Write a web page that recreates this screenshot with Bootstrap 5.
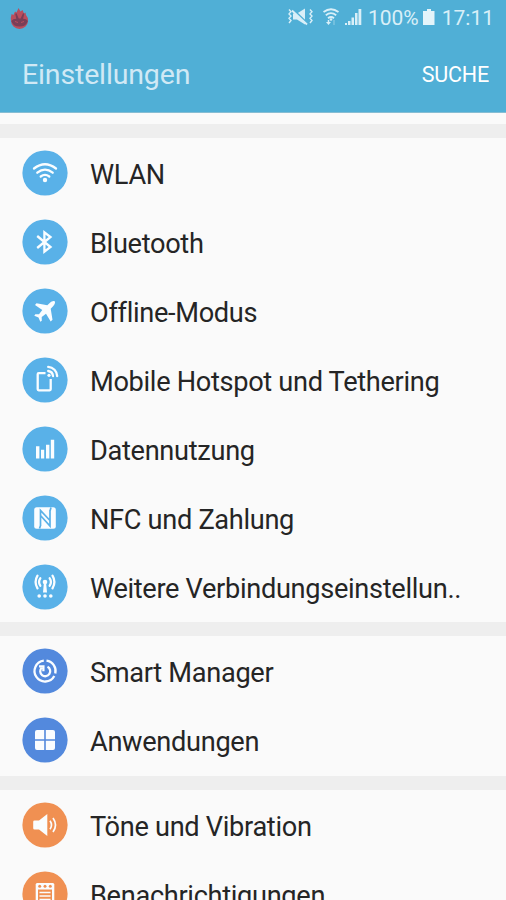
<!DOCTYPE html>
<html lang="de">
<head>
<meta charset="utf-8">
<meta name="viewport" content="width=device-width, initial-scale=1">
<title>Einstellungen</title>
<link href="https://cdn.jsdelivr.net/npm/bootstrap@5.3.0/dist/css/bootstrap.min.css" rel="stylesheet">
<style>
body{font-family:Roboto,sans-serif;background:#fafafa;color:#252525;height:900px}
.top{background:#50afd6;height:113px;border-bottom:1px solid #86bdd3}
.status{height:36px;color:#d9eff8;font-size:21px;line-height:36px;padding-right:12px}
.appbar{height:76px;padding:2px 17px 0 22px}
.title{font-size:28.500px;line-height:74px;color:#d0e9f5;letter-spacing:-.15px}
.search{font-size:21.500px;line-height:74px;color:#fff;letter-spacing:-.2px}
.list{padding-top:11px}
.section{border-top:14px solid #eee;padding-bottom:1px}
.section.blue{padding-bottom:2px}
.item{height:69px;padding-left:22px}
.item svg{width:46px;height:46px;flex:none}
.label{font-size:27.200px;line-height:32px;letter-spacing:-.32px;padding-top:5px;margin-left:22px;white-space:nowrap;color:#252525}
.disc{fill:#59b1e8}.blue .disc{fill:#5389dd}.orange .disc{fill:#f09052}
.ln{fill:none;stroke:#fafdff;stroke-width:2.300}
.ln.thin{stroke-width:1.700}
.fl{fill:#fafdff}
</style>
<script src="https://cdn.jsdelivr.net/npm/bootstrap@5.3.0/dist/js/bootstrap.bundle.min.js"></script>
</head>
<body class="overflow-hidden">
<header class="top">
  <div class="status d-flex align-items-center">
    <svg class="ms-2" width="24" height="24" viewBox="8 6 24 24"><path d="M11.500 14l2 1 1.500-3.500 1.500 1L18.500 8l2 3.500 2-1.500 1.500 3.500 1.500-1 .5 2.500q2.500 3 2 5.500a8.500 8.500 0 0 1-17 0q-.5-3 .5-6z" fill="#b94e5e"/><path d="M11.300 21q1.700-2.200 5-2.200l-1.100-5 1.300-.5 2.200 5.300h2l2.300-5.300 1.300.5-1.200 5q3.300 0 4.800 2.200-1.500 5.500-8.300 5.500t-8.300-5.500z" fill="#7a3e57"/><path d="M15 21.500l3 1M24 21.500l-3 1" stroke="#b94e5e"/></svg>
    <div class="ms-auto d-flex align-items-center">
      <svg width="27" height="20" viewBox="287 8 27 20"><path d="M293 13.500h4l8-5v16l-8-5h-4z" fill="#d9eff8"/><path d="M289 9.500l2 2.200-2 2.200 2 2.200-2 2.200 2 2.200-2 2.500M310 9.500l2 2.200-2 2.200 2 2.200-2 2.200 2 2.200-2 2.500" fill="none" stroke="#d9eff8" stroke-width="1.400"/><path d="M292 8.500l16 15.500" stroke="#50afd6" stroke-width="2"/><path d="M292 10.500l15 14" stroke="#d9eff8" stroke-width="1.800"/></svg>
      <svg width="54" height="20" viewBox="314 8 54 20"><g fill="none" stroke="#d9eff8" stroke-width="1.800"><path d="M323.500 12q7.500-5.500 15 0M325.800 15.200q5.200-4 10.400 0M328 18.200q3-2.500 6 0"/><path d="M328.500 20v3" stroke-width="1.500"/><path d="M334 25v-5" stroke-width="1" opacity=".5"/></g><g fill="#d9eff8"><path d="M326 22h5l-2.500 3z"/><circle cx="331" cy="19.500" r="1.300"/><path d="M345 23h2v2h-2zM348 21h2.500v4H348zM351.500 17.500h2.500V25h-2.500zM355 13h2.500v12H355zM358.500 9h2.800v16h-2.800z"/></g></svg>
      <span>100%</span>
      <svg width="23" height="20" viewBox="419 8 23 20"><path d="M427 9h4v2h3.500v14h-11.500V11h4z" fill="#e4f4fa"/></svg>
      <span>17:11</span>
    </div>
  </div>
  <div class="appbar d-flex justify-content-between align-items-center">
    <h1 class="title m-0 fw-normal">Einstellungen</h1><a class="search text-decoration-none" href="#">SUCHE</a>
  </div>
</header>
<main class="list">
<section class="section">
  <div class="item d-flex align-items-center"><svg viewBox="-23 -23 46 46"><circle class="disc" r="22.600"/><path class="ln" stroke-linecap="round" d="M-11-4.500Q0-13 11-4.500M-7.700-.3Q0-6.500 7.700-.3M-4.300 3.500Q0 .3 4.300 3.500"/><circle class="fl" cy="7" r="2.200"/></svg><span class="label">WLAN</span></div>
  <div class="item d-flex align-items-center"><svg viewBox="-23 -23 46 46"><circle class="disc" r="22.600"/><path class="ln" d="M-7.800-6L5.500 5-.6 9.700v-19.400L5.500-5-7.800 6"/></svg><span class="label">Bluetooth</span></div>
  <div class="item d-flex align-items-center"><svg viewBox="-23 -23 46 46"><circle class="disc" r="22.600"/><path class="fl" d="M9.700-9.700C8.500-10.500 6.500-9.700 5-8.300L2.300-5.800-8.500-7.700-10-6-2.700-1-6 3.300-9.700 3.200-10.700 4.700-6.500 6.500-4.700 10.700-3.200 9.700-3.300 6 1 2.700 5.700 10.500 7.500 8.800 5.700-2.300 8.300-5C9.700-6.500 10.500-8.500 9.700-9.700z"/></svg><span class="label">Offline-Modus</span></div>
  <div class="item d-flex align-items-center"><svg viewBox="-23 -23 46 46"><circle class="disc" r="22.600"/><path class="ln" d="M.5-6.800h-6.800q-1 0-1 1V9.300q0 1 1 1H4.700q1 0 1-1V-1"/><path class="ln" stroke-linecap="round" d="M3.200-9A5.500 5.500 0 0 1 8-4M3.200-13.200a9.600 9.600 0 0 1 9 9.300"/><circle class="fl" cx="4" cy="-4.700" r="1.600"/></svg><span class="label">Mobile Hotspot und Tethering</span></div>
  <div class="item d-flex align-items-center"><svg viewBox="-23 -23 46 46"><circle class="disc" r="22.600"/><path class="fl" d="M-9-2.700h3.400V9.500H-9zM-4 .8h3.200v8.700H-4zM1-4.300h3.400V9.500H1zM5.800-9.300H9.200V9.500H5.800z"/></svg><span class="label">Datennutzung</span></div>
  <div class="item d-flex align-items-center"><svg viewBox="-23 -23 46 46"><circle class="disc" r="22.600"/><rect class="fl" x="-10.800" y="-10.800" width="21.600" height="21.600" rx="2.500"/><path d="M-4.500 8V-7.500L4.500 2M-4.500-2.500L5 8V-8M-5.500 10.500L-4.300 7M5 -7L6-10.500" fill="none" stroke="#59b1e8" stroke-width="1.700"/></svg><span class="label">NFC und Zahlung</span></div>
  <div class="item d-flex align-items-center"><svg viewBox="-23 -23 46 46"><circle class="disc" r="22.600"/><path class="ln" stroke-linecap="round" d="M-4.700-8.700q-2.500 3.700 0 7.400M4.700-8.700q2.500 3.700 0 7.400M-7.500-11.300q-3.800 6.300 0 12.600M7.500-11.300q3.800 6.300 0 12.600"/><path class="fl" d="M-1-5h2l1 10.500h-4z"/><g class="fl"><circle cy="-5" r="2.300"/><circle cx="-5.800" cy="9" r="1.800"/><circle cy="9" r="1.800"/><circle cx="5.800" cy="9" r="1.800"/></g></svg><span class="label">Weitere Verbindungseinstellun..</span></div>
</section>
<section class="section blue">
  <div class="item d-flex align-items-center"><svg viewBox="-23 -23 46 46"><circle class="disc" r="22.600"/><path class="ln" d="M-1.200-10.400A10.500 10.500 0 1 0 9.300 5M1.500-10.400A10.500 10.500 0 0 1 10.300 2.500"/><path class="ln" d="M2.500-4.200A5 5 0 1 1-3.300-3.300M-6-4.700h4.400v5"/></svg><span class="label">Smart Manager</span></div>
  <div class="item d-flex align-items-center"><svg viewBox="-23 -23 46 46"><circle class="disc" r="22.600"/><path class="fl" d="M-.8-10v9.200H-10V-8q0-2 2-2zM.8-10H8q2 0 2 2v7.200H.8zM-10 .8h9.200V10H-8q-2 0-2-2zM.8.8H10V8q0 2-2 2H.8z"/></svg><span class="label">Anwendungen</span></div>
</section>
<section class="section orange">
  <div class="item d-flex align-items-center"><svg viewBox="-23 -23 46 46"><circle class="disc" r="22.600"/><path class="fl" d="M-10.500-4.500h4.500L2.300-11V11L-6 4.500h-4.500q-1.300 0-1.300-1.300v-6.400q0-1.300 1.300-1.300z"/><path class="ln thin" d="M5-4.300q3 4.300 0 8.600M8-7q5 7 0 14"/></svg><span class="label">Töne und Vibration</span></div>
  <div class="item d-flex align-items-center"><svg viewBox="-23 -23 46 46"><circle class="disc" r="22.600"/><rect class="fl" x="-9.300" y="-11" width="18.600" height="23" rx="1.500"/><g class="disc"><circle cx="-5.300" cy="-7.700" r="1.500"/><circle cy="-7.700" r="1.500"/><circle cx="5.300" cy="-7.700" r="1.500"/><path d="M-7-4.500H7V10H-7z"/></g><path class="ln thin" d="M-5.500-1.500h11M-5.500 2h11M-5.500 5.500h11"/></svg><span class="label">Benachrichtigungen</span></div>
</section>
</main>
</body>
</html>
